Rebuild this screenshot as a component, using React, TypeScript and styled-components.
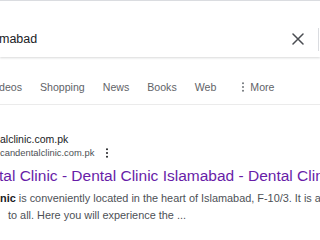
import styled, { createGlobalStyle } from "styled-components";

const GlobalStyle = createGlobalStyle`
  html, body {
    margin: 0;
    padding: 0;
    background: #ffffff;
  }
  body {
    font-family: "Liberation Sans", Arial, sans-serif;
    color: #202124;
  }
`;

const Page = styled.div`
  width: 320px;
  height: 240px;
  overflow: hidden;
  background: #ffffff;
`;

const SearchBar = styled.div`
  height: 57px;
  box-sizing: border-box;
  border-top: 1px solid #dadce0;
  padding-top: 26px;
  box-shadow: 0 1px 2px rgba(60, 64, 67, 0.2);
  position: relative;
  z-index: 1;
`;

const SearchRow = styled.div`
  display: flex;
  align-items: center;
  height: 24px;
`;

const Query = styled.div`
  flex: 1;
  font-size: 12.5px;
  line-height: 24px;
  color: #202124;
  white-space: nowrap;
  margin-left: -1px;
`;

const ClearButton = styled.div`
  width: 24px;
  height: 24px;
  display: flex;
  align-items: center;
  justify-content: center;
  margin-right: 8px;
`;

const Divider = styled.div`
  width: 1px;
  height: 23px;
  background: #dadce0;
  margin-right: 1px;
`;

const Tabs = styled.nav`
  display: flex;
  gap: 18px;
  padding: 21px 0 9px;
  border-bottom: 1px solid #ebebeb;
  margin-top: 1px;
`;

const Tab = styled.div<{ $more?: boolean }>`
  display: flex;
  align-items: center;
  gap: 5px;
  font-size: 10.6px;
  line-height: 16px;
  color: #5f6368;
  white-space: nowrap;
  margin-left: ${(p) => (p.$more ? 7 : 0)}px;
  &:first-child {
    margin-left: -1px;
  }
`;

const Result = styled.div`
  padding-top: 27px;
`;

const SiteName = styled.div`
  font-size: 10.5px;
  line-height: 14px;
  color: #202124;
  white-space: nowrap;
`;

const UrlRow = styled.div`
  display: flex;
  align-items: center;
  gap: 11px;
  height: 13px;
`;

const Url = styled.div`
  font-size: 9.4px;
  line-height: 13px;
  color: #4d5156;
  white-space: nowrap;
`;

const Title = styled.div`
  margin-top: 7px;
  font-size: 15.5px;
  line-height: 20px;
  color: #681da8;
  white-space: nowrap;
  margin-left: -1px;
`;

const Snippet = styled.div`
  margin-top: 4px;
  font-size: 10.9px;
  line-height: 17px;
  color: #4d5156;
`;

const SnippetLine = styled.div<{ $indent?: number }>`
  white-space: nowrap;
  padding-left: ${(p) => p.$indent ?? 0}px;
  b {
    color: #202124;
    font-weight: bold;
  }
`;

const VDots = ({ size, color }: { size: number; color: string }) => (
  <svg width={size / 2.5} height={size} viewBox="0 0 4 10">
    <circle cx="2" cy="1.3" r="1" fill={color} />
    <circle cx="2" cy="5" r="1" fill={color} />
    <circle cx="2" cy="8.7" r="1" fill={color} />
  </svg>
);

const tabs = ["deos", "Shopping", "News", "Books", "Web"];

export default function App() {
  return (
    <Page>
      <GlobalStyle />
      <SearchBar>
        <SearchRow>
          <Query>mabad</Query>
          <ClearButton>
            <svg width="12" height="12" viewBox="0 0 12 12">
              <path
                d="M1 1 L11 11 M11 1 L1 11"
                stroke="#4a4d52"
                strokeWidth="1.5"
                strokeLinecap="round"
              />
            </svg>
          </ClearButton>
          <Divider />
        </SearchRow>
      </SearchBar>
      <Tabs>
        {tabs.map((t) => (
          <Tab key={t}>{t}</Tab>
        ))}
        <Tab $more>
          <VDots size={10} color="#70757a" />
          More
        </Tab>
      </Tabs>
      <Result>
        <SiteName>alclinic.com.pk</SiteName>
        <UrlRow>
          <Url>candentalclinic.com.pk</Url>
          <VDots size={10} color="#202124" />
        </UrlRow>
        <Title>tal Clinic - Dental Clinic Islamabad - Dental Clinic</Title>
        <Snippet>
          <SnippetLine>
            <b>nic</b> is conveniently located in the heart of Islamabad, F-10/3. It is accessible
          </SnippetLine>
          <SnippetLine $indent={8}>to all. Here you will experience the ...</SnippetLine>
        </Snippet>
      </Result>
    </Page>
  );
}
